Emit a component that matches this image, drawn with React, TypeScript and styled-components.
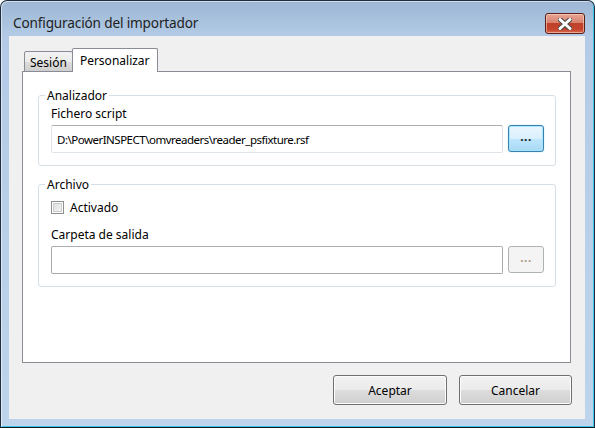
import styled, { createGlobalStyle } from "styled-components";

const GlobalStyle = createGlobalStyle`
  html, body {
    margin: 0;
    padding: 0;
    background: #ffffff;
  }
  * {
    box-sizing: border-box;
  }
`;

const uiFont = `"Noto Sans", "Open Sans", sans-serif`;

// Window frame (Aero style)
const Window = styled.div`
  width: 595px;
  height: 428px;
  display: flex;
  flex-direction: column;
  padding: 0 9px 8px 8px;
  border: 1px solid #1f2d3f;
  border-bottom-color: #0e1a26;
  border-radius: 7px 7px 0 0;
  background: linear-gradient(#9cb6d4 0px, #b3cbe6 36px, #bdd4ec 100%);
  box-shadow: inset 1px 1px 0 rgba(255, 255, 255, 0.55),
    inset -1px -1px 0 #39c4e6;
  font-family: ${uiFont};
  color: #000;
`;

const TitleBar = styled.div`
  height: 35px;
  display: flex;
  align-items: flex-start;
  justify-content: space-between;
  padding: 12px 0 0 4px;
`;

const Title = styled.div`
  font-size: 13.6px;
  line-height: 20px;
  color: #1e1e1e;
  letter-spacing: -0.15px;
`;

const CloseButton = styled.div`
  width: 40px;
  height: 21px;
  border: 1px solid #5b1f18;
  border-radius: 3px;
  display: flex;
  align-items: center;
  justify-content: center;
  background: linear-gradient(
    #e9a595 0%,
    #d8826f 45%,
    #c0412a 50%,
    #c4432c 80%,
    #d86a50 100%
  );
  box-shadow: inset 0 0 0 1px rgba(255, 220, 210, 0.55);
`;

const Client = styled.div`
  flex: 1;
  display: flex;
  flex-direction: column;
  background: #f0f0f0;
  padding: 13px 14px 14px 13px;
`;

const TabStrip = styled.div`
  display: flex;
  align-items: flex-end;
  height: 23px;
  padding-left: 2px;
  margin-bottom: -1px;
  position: relative;
  z-index: 1;
`;

const Tab = styled.div<{ $active?: boolean }>`
  height: ${(p) => (p.$active ? 24 : 21)}px;
  padding: 0 ${(p) => (p.$active ? 7 : 5)}px;
  margin-left: ${(p) => (p.$active ? -1 : 0)}px;
  display: flex;
  align-items: center;
  font-size: 12px;
  border: 1px solid #898c95;
  border-bottom: ${(p) => (p.$active ? "none" : "1px solid #898c95")};
  border-radius: 2px 2px 0 0;
  background: ${(p) =>
    p.$active
      ? "#ffffff"
      : "linear-gradient(#f2f2f2 0%, #ebebeb 50%, #dddddd 51%, #cfcfcf 100%)"};
  padding-top: ${(p) => (p.$active ? 0 : 2)}px;
`;

const TabPanel = styled.div`
  flex: 1;
  background: #ffffff;
  border: 1px solid #898c95;
  padding: 0 14px 0 15px;
  display: flex;
  flex-direction: column;
`;

const Group = styled.fieldset<{ $top: number }>`
  margin: ${(p) => p.$top}px 0 0 0;
  border: 1px solid #d5dfe5;
  border-radius: 3px;
  padding: 0 11px 12px 12px;
  min-width: 0;
`;

const Legend = styled.legend`
  font-size: 12px;
  line-height: 15px;
  padding: 0 2px;
  margin-left: -6px;
  color: #000;
`;

const FieldLabel = styled.div<{ $top: number }>`
  font-size: 12px;
  line-height: 15px;
  margin-top: ${(p) => p.$top}px;
`;

const FieldRow = styled.div`
  display: flex;
  align-items: center;
  gap: 5px;
  margin-top: 4px;
`;

const TextBox = styled.div<{ $plain?: boolean }>`
  flex: 1;
  height: 28px;
  display: flex;
  align-items: center;
  padding-left: 5px;
  font-size: 11.5px;
  letter-spacing: -0.5px;
  background: #ffffff;
  border: 1px solid ${(p) => (p.$plain ? "#a9a9a9" : "#dfe3ea")};
  border-top-color: #abadb3;
  border-radius: 2px;
`;

const BrowseButton = styled.div<{ $disabled?: boolean }>`
  width: 36px;
  height: 27px;
  margin-top: -1px;
  display: flex;
  align-items: center;
  justify-content: center;
  font-size: 12px;
  font-weight: 700;
  letter-spacing: 0.5px;
  padding-bottom: 4px;
  border-radius: 3px;
  border: 1px solid ${(p) => (p.$disabled ? "#adb2b5" : "#3c7fb1")};
  color: ${(p) => (p.$disabled ? "#b09c8c" : "#1a1a1a")};
  background: ${(p) =>
    p.$disabled
      ? "#f4f4f4"
      : "linear-gradient(#eaf6fd 0%, #d9f0fc 50%, #bee6fd 51%, #a7d9f5 100%)"};
  box-shadow: ${(p) =>
    p.$disabled
      ? "none"
      : "inset 0 0 0 1px rgba(160, 230, 255, 0.9), 0 0 1px #48b8e8"};
`;

const CheckRow = styled.label`
  display: flex;
  align-items: center;
  gap: 6px;
  margin-top: 8px;
  font-size: 12px;
  line-height: 15px;
`;

const CheckBox = styled.span`
  width: 13px;
  height: 13px;
  border: 1px solid #8e8f8f;
  background: #ffffff;
  box-shadow: inset 0 0 0 1px #ffffff, inset 0 0 0 2px #c9cdd2;
  background-image: linear-gradient(135deg, #dcdcdc, #f8f8f8);
  background-clip: content-box;
  padding: 2px;
`;

const Footer = styled.div`
  display: flex;
  justify-content: flex-end;
  gap: 12px;
  margin: 12px -1px 0 0;
`;

const DialogButton = styled.div<{ $width: number }>`
  width: ${(p) => p.$width}px;
  height: 30px;
  display: flex;
  align-items: center;
  justify-content: center;
  font-size: 12px;
  border: 1px solid #707070;
  border-radius: 3px;
  background: linear-gradient(#f2f2f2 0%, #ebebeb 50%, #dddddd 51%, #cfcfcf 100%);
  box-shadow: inset 0 0 0 1px #fcfcfc;
`;

const CloseGlyph = () => (
  <svg width="14" height="12" viewBox="0 0 14 12">
    <path
      d="M2 1.5 L12 10.5 M12 1.5 L2 10.5"
      stroke="#4a4a4a"
      strokeWidth="5"
      strokeLinecap="round"
    />
    <path
      d="M2 1.5 L12 10.5 M12 1.5 L2 10.5"
      stroke="#ffffff"
      strokeWidth="3"
      strokeLinecap="round"
    />
  </svg>
);

const App = () => {
  return (
    <>
      <GlobalStyle />
      <Window>
        <TitleBar>
          <Title>Configuración del importador</Title>
          <CloseButton>
            <CloseGlyph />
          </CloseButton>
        </TitleBar>

        <Client>
          <TabStrip>
            <Tab>Sesión</Tab>
            <Tab $active>Personalizar</Tab>
          </TabStrip>

          <TabPanel>
            {/* Analizador */}
            <Group $top={16}>
              <Legend>Analizador</Legend>
              <FieldLabel $top={3}>Fichero script</FieldLabel>
              <FieldRow>
                <TextBox>D:\PowerINSPECT\omvreaders\reader_psfixture.rsf</TextBox>
                <BrowseButton>...</BrowseButton>
              </FieldRow>
            </Group>

            {/* Archivo */}
            <Group $top={11}>
              <Legend>Archivo</Legend>
              <CheckRow>
                <CheckBox />
                Activado
              </CheckRow>
              <FieldLabel $top={12}>Carpeta de salida</FieldLabel>
              <FieldRow>
                <TextBox $plain />
                <BrowseButton $disabled>...</BrowseButton>
              </FieldRow>
            </Group>
          </TabPanel>

          <Footer>
            <DialogButton $width={114}>Aceptar</DialogButton>
            <DialogButton $width={113}>Cancelar</DialogButton>
          </Footer>
        </Client>
      </Window>
    </>
  );
};

export default App;
